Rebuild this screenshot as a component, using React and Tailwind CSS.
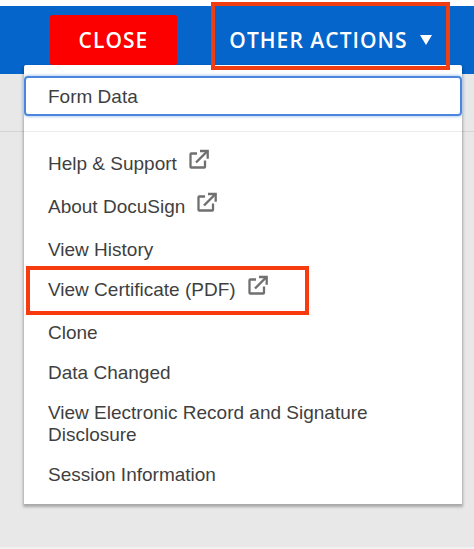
import React from 'react';

const ITEMS = [
    { label: 'Help & Support', external: true },
    { label: 'About DocuSign', external: true },
    { label: 'View History' },
    { label: 'View Certificate (PDF)', external: true, highlighted: true },
    { label: 'Clone' },
    { label: 'Data Changed' },
    { label: 'View Electronic Record and Signature Disclosure' },
    { label: 'Session Information' },
];

function ExternalIcon() {
    return (
        <svg viewBox="0 0 20 20" className="-mt-1 ml-3 h-5 w-5 shrink-0" fill="none" stroke="#707070" strokeWidth="2.3" aria-hidden="true">
            <path d="M8 4.5H2.3Q1.5 4.5 1.5 5.3V17.7Q1.5 18.5 2.3 18.5H15.2Q16 18.5 16 17.7V11.5" />
            <path d="M7 13.5L18 2.5" strokeWidth="2.4" />
            <path d="M11 2H18.7V9.7" />
        </svg>
    );
}

function MenuItem({ label, external, highlighted }) {
    if (external) {
        return (
            <li className="relative">
                <a href="#" className="flex items-start px-6 pt-[9px] pb-3">
                    {label}
                    <ExternalIcon />
                </a>
                {highlighted && (
                    <span className="pointer-events-none absolute -top-1 -bottom-0.5 left-0.5 w-[283px] border-4 border-[#f83b0f]" />
                )}
            </li>
        );
    }

    return (
        <li>
            <button type="button" className="block w-full py-[9px] pr-16 pl-6 text-left">
                {label}
            </button>
        </li>
    );
}

export default function App() {
    return (
        <div className="min-h-screen border-b-2 border-[#f2f2f2] bg-[#e8e8e8] font-['Liberation_Sans',Arial,sans-serif] text-[19px] leading-[22px] text-[#3f3f3f]">
            <div className="h-1.5 bg-white" />
            <header className="flex h-[68px] items-start justify-between bg-[#0565cb] pr-6 pl-[50px] font-['Open_Sans',sans-serif] text-[21px] font-semibold tracking-wider text-white">
                <button type="button" className="mt-[9px] h-[50px] w-[127px] rounded-xs bg-[#fc0000]">
                    CLOSE
                </button>
                {/* The outline stays above the open menu */}
                <button
                    type="button"
                    aria-expanded="true"
                    className="relative z-20 -mt-1 flex h-[68px] w-[239px] items-center justify-center gap-3 border-4 border-[#f03d12] pt-2"
                >
                    <span className="whitespace-nowrap">OTHER ACTIONS</span>
                    <svg viewBox="0 0 12 10" className="h-2.5 w-3 shrink-0" fill="currentColor" aria-hidden="true">
                        <path d="M0 0H12L6 10Z" />
                    </svg>
                </button>
            </header>

            <div className="h-[58px] border-b border-[#d4d4d4]" />

            <main className="relative z-10 -mt-[67px] mr-3 ml-6 rounded-t-xs bg-white pt-[11px] pb-[9px] shadow-[0_2px_3px_1px_rgba(0,0,0,0.28)]">
                <button
                    type="button"
                    className="block h-10 w-full rounded-sm border-2 border-[#4c86dc] px-[22px] pt-0.5 text-left shadow-[0_0_3px_1px_#b5d0f5]"
                >
                    Form Data
                </button>
                <hr className="mt-[15px] mb-3 border-[#ececec]" />
                <ul>
                    {ITEMS.map((item) => (
                        <MenuItem key={item.label} {...item} />
                    ))}
                </ul>
            </main>
        </div>
    );
}
